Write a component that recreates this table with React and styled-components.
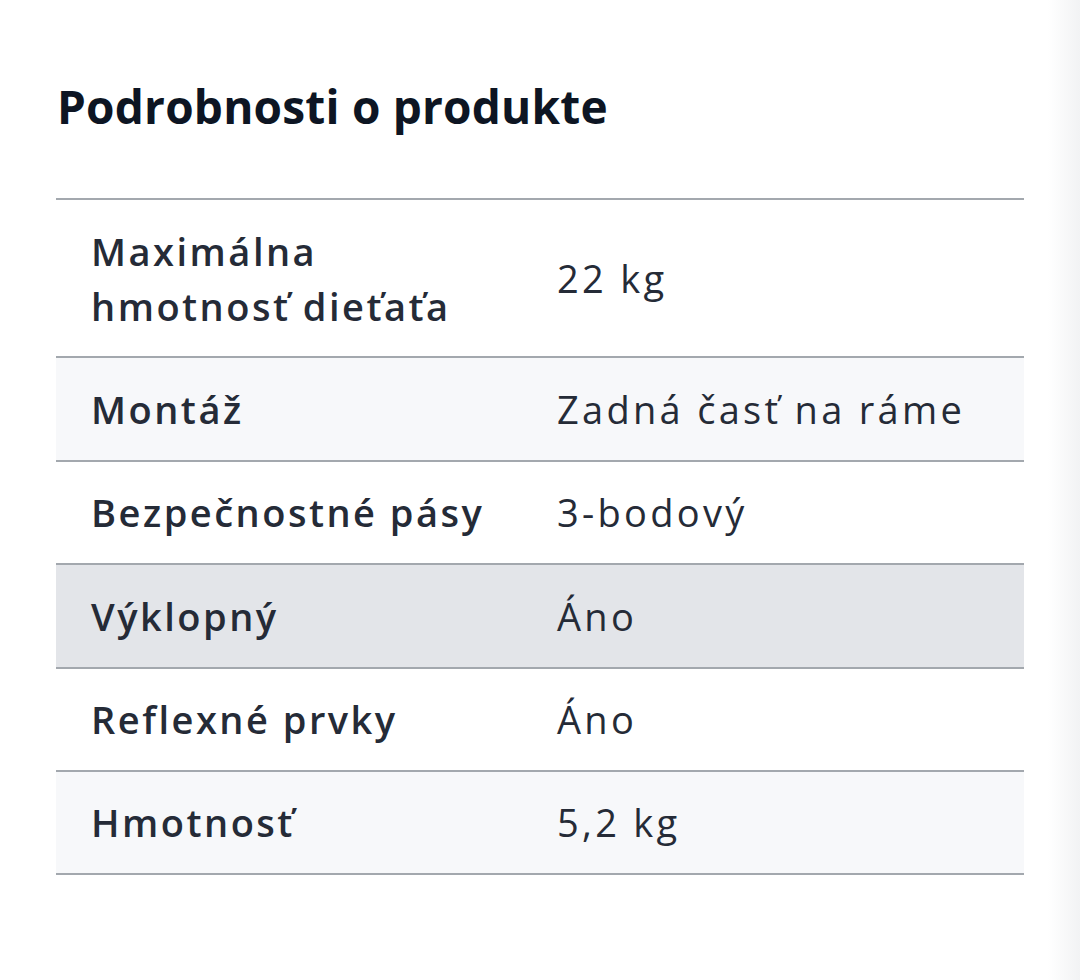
import React from 'react';
import styled, { createGlobalStyle } from 'styled-components';

const GlobalStyle = createGlobalStyle`
  html, body {
    margin: 0;
    padding: 0;
  }
  body {
    min-height: 980px;
    background: linear-gradient(to right, #ffffff 0, #ffffff 1048px, #f2f3f4 1080px);
    font-family: "Open Sans", Inter, sans-serif;
  }
`;

const Section = styled.section`
  padding: 76px 56px 0 56px;
  width: 968px;
`;

const Title = styled.h2`
  margin: 0 0 62px 1px;
  font-size: 46px;
  line-height: 60px;
  font-weight: 700;
  color: #0d1523;
  letter-spacing: 0.2px;
`;

const Table = styled.table`
  width: 100%;
  border-collapse: collapse;
  border-top: 2px solid #a3a8ae;
`;

const Row = styled.tr`
  background: ${(p) => p.$bg || '#ffffff'};
  border-bottom: 2px solid #a3a8ae;
`;

const Cell = styled.td`
  padding: 23.5px 34px 22.9px 35px;
  font-size: 38px;
  line-height: 55px;
  color: #252b37;
  vertical-align: middle;
  font-weight: ${(p) => (p.$label ? 600 : 400)};
  letter-spacing: ${(p) => (p.$label ? '2.5px' : '3.3px')};
  width: ${(p) => (p.$label ? '397px' : 'auto')};
`;

const rows = [
  { label: 'Maximálna hmotnosť dieťaťa', value: '22 kg' },
  { label: 'Montáž', value: 'Zadná časť na ráme', bg: '#f7f8fa' },
  { label: 'Bezpečnostné pásy', value: '3-bodový' },
  { label: 'Výklopný', value: 'Áno', bg: '#e3e5e9' },
  { label: 'Reflexné prvky', value: 'Áno' },
  { label: 'Hmotnosť', value: '5,2 kg', bg: '#f7f8fa' },
];

const App = () => {
  return (
    <>
      <GlobalStyle />
      <Section>
        <Title>Podrobnosti o produkte</Title>
        <Table>
          <tbody>
            {rows.map((r) => (
              <Row key={r.label} $bg={r.bg}>
                <Cell $label>{r.label === 'Maximálna hmotnosť dieťaťa' ? <>Maximálna<br />hmotnosť dieťaťa</> : r.label}</Cell>
                <Cell>{r.value}</Cell>
              </Row>
            ))}
          </tbody>
        </Table>
      </Section>
    </>
  );
};

export default App;
